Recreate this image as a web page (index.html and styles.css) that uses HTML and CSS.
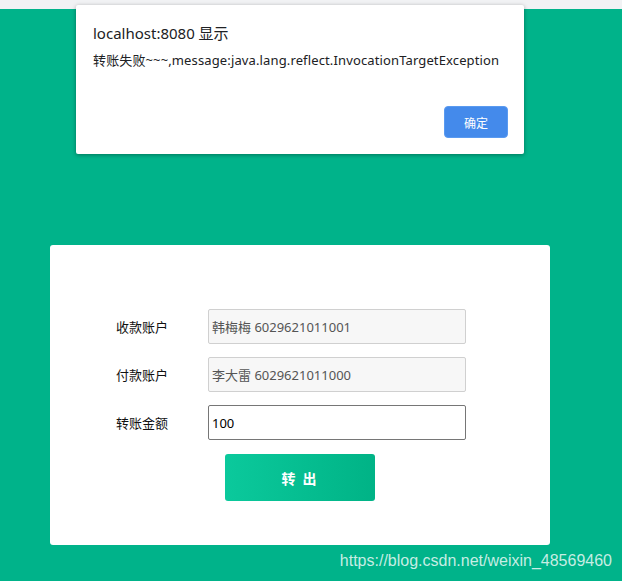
FILE: index.html
```html
<!DOCTYPE html>
<html lang="zh">
<head>
<meta charset="utf-8">
<title>转账</title>
<link rel="stylesheet" href="styles.css">
</head>
<body>
<div class="topbar"></div>
<main class="main">
  <section class="card">
    <form class="form">
      <label class="label">收款账户</label>
      <input class="field field-disabled" value="韩梅梅 6029621011001" disabled>
      <label class="label">付款账户</label>
      <input class="field field-disabled" value="李大雷 6029621011000" disabled>
      <label class="label">转账金额</label>
      <input class="field field-active" value="100">
      <span></span>
      <button type="button" class="submit">转 出</button>
    </form>
  </section>
</main>
<div class="dialog">
  <div class="dialog-title">localhost:8080 显示</div>
  <div class="dialog-msg">转账失败~~~,message:java.lang.reflect.InvocationTargetException</div>
  <div class="dialog-actions"><button type="button" class="ok">确定</button></div>
</div>
<div class="watermark">https://blog.csdn.net/weixin_48569460</div>
</body>
</html>
```
FILE: styles.css
```css
html, body {
  margin: 0;
  padding: 0;
  height: 100%;
}
body {
  background: #00b38a;
  font-family: "Noto Sans", "Noto Sans CJK SC", sans-serif;
  overflow: hidden;
}
.topbar {
  height: 9px;
  background: #f1f2f4;
}
.main {
  padding: 236px 0 0 50px;
}
.card {
  width: 500px;
  height: 300px;
  background: #fff;
  border-radius: 3px;
  box-sizing: border-box;
  padding: 64px 0 0 66px;
}
.form {
  display: grid;
  grid-template-columns: 92px 258px;
  grid-auto-rows: 35px;
  row-gap: 13px;
  align-items: center;
}
.label {
  font-size: 13px;
  color: #111;
  font-family: "Noto Sans CJK SC", sans-serif;
}
.field {
  box-sizing: border-box;
  width: 258px;
  height: 35px;
  margin: 0;
  padding: 0 3px;
  font-size: 13px;
  font-family: "Noto Sans", "Noto Sans CJK SC", sans-serif;
  border-radius: 2px;
  outline: none;
}
.field-disabled {
  background: #f7f7f7;
  border: 1px solid #d0d0d0;
  color: #555;
}
.field-active {
  background: #fff;
  border: 1px solid #767676;
  color: #000;
}
.submit {
  margin: 1px 0 0 17px;
  align-self: start;
  width: 150px;
  height: 47px;
  border: none;
  border-radius: 3px;
  background: linear-gradient(90deg, #0bc99c, #00b386);
  color: #fff;
  font-size: 14px;
  font-weight: bold;
  font-family: "Noto Sans CJK SC", sans-serif;
  letter-spacing: 2px;
}
.dialog {
  position: absolute;
  left: 76px;
  top: 5px;
  width: 448px;
  height: 149px;
  box-sizing: border-box;
  background: #fff;
  border-radius: 2px;
  box-shadow: 0 1px 4px rgba(0,0,0,0.35);
  padding: 18px 16px 16px 17px;
  display: flex;
  flex-direction: column;
}
.dialog-title {
  font-size: 15px;
  color: #202124;
  line-height: 20px;
}
.dialog-msg {
  margin-top: 8px;
  font-size: 13px;
  letter-spacing: 0.13px;
  color: #202124;
  line-height: 18px;
  white-space: nowrap;
}
.dialog-actions {
  margin-top: auto;
  display: flex;
  justify-content: flex-end;
}
.ok {
  width: 64px;
  height: 32px;
  border: 1px solid #5a9af0;
  border-radius: 4px;
  background: #448aeb;
  color: #fff;
  font-size: 12px;
  font-family: "Noto Sans CJK SC", sans-serif;
}
.watermark {
  position: absolute;
  right: 10px;
  bottom: 11px;
  font-family: "Liberation Sans", sans-serif;
  font-size: 16px;
  color: rgba(255,255,255,0.78);
}
```
